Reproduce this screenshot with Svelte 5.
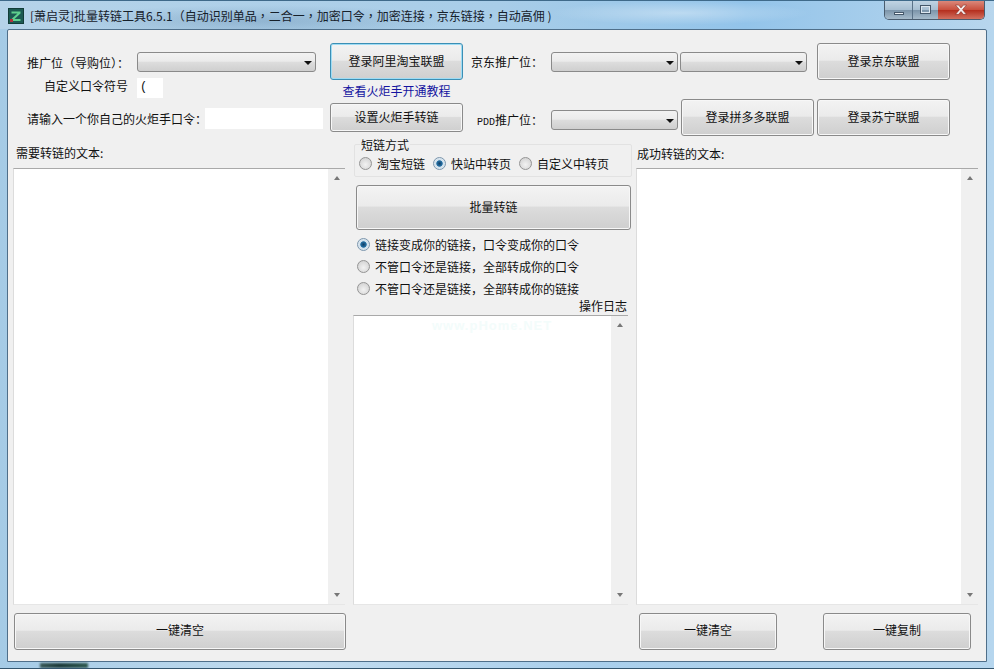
<script lang="ts">
  const shortModes = [
    { label: "淘宝短链", checked: false },
    { label: "快站中转页", checked: true },
    { label: "自定义中转页", checked: false },
  ];
  const convertModes = [
    { label: "链接变成你的链接，口令变成你的口令", checked: true },
    { label: "不管口令还是链接，全部转成你的口令", checked: false },
    { label: "不管口令还是链接，全部转成你的链接", checked: false },
  ];
</script>

{#snippet combo(cls: string)}
  <div class="combo {cls}"><span class="caret"></span></div>
{/snippet}

{#snippet textbox()}
  <div class="memo">
    <div class="scrollbar">
      <span class="arrow up"></span>
      <span class="arrow down"></span>
    </div>
  </div>
{/snippet}

{#snippet radio(checked: boolean)}
  <span class="radio" class:checked></span>
{/snippet}

<div class="window">
  <header class="titlebar">
    <svg class="app-icon" width="16" height="16" viewBox="0 0 16 16">
      <rect width="16" height="16" fill="#123c38" />
      <rect x="1" y="1" width="14" height="14" fill="#1c5a52" />
      <path d="M3.5 3.5h9v2l-6 5.5h6v2h-9v-2l6-5.5h-6z" fill="#5fd08e" />
      <rect x="2" y="11" width="3" height="3" fill="#b0303c" />
    </svg>
    <span class="title">[萧启灵]批量转链工具6.5.1（自动识别单品，二合一，加密口令，加密连接，京东链接，自动高佣 )</span>
    <div class="caption-buttons">
      <span class="cap min"><i></i></span>
      <span class="cap max"><i></i></span>
      <span class="cap close">
        <svg width="16" height="12" viewBox="0 0 14 11">
          <path d="M2 1h2.8L7 3.6 9.2 1H12L8.4 5.2 12 9.5H9.2L7 6.9 4.8 9.5H2l3.6-4.3z" fill="#f6eeee" stroke="#7c2a22" stroke-width=".5" />
        </svg>
      </span>
    </div>
  </header>

  <main class="client">
    <section class="top">
      <div class="top-left">
        <div class="row row-a">
          <span class="lbl">推广位（导购位）：</span>
          {@render combo("wide")}
        </div>
        <div class="row row-b">
          <span class="lbl">自定义口令符号</span>
          <div class="input symbol">(</div>
        </div>
        <div class="row row-c">
          <span class="lbl">请输入一个你自己的火炬手口令：</span>
          <div class="input token"></div>
        </div>
      </div>

      <div class="top-mid">
        <button class="btn focused login">登录阿里淘宝联盟</button>
        <span class="link">查看火炬手开通教程</span>
        <button class="btn setup">设置火炬手转链</button>
      </div>

      <div class="top-right">
        <div class="row jd">
          <span class="lbl jd-lbl">京东推广位：</span>
          {@render combo("narrow")}
          {@render combo("narrow")}
          <button class="btn site first">登录京东联盟</button>
        </div>
        <div class="row pdd">
          <span class="lbl pdd-lbl"><em>PDD</em>推广位：</span>
          {@render combo("narrow")}
          <button class="btn site pdd-btn">登录拼多多联盟</button>
          <button class="btn site">登录苏宁联盟</button>
        </div>
      </div>
    </section>

    <section class="panels">
      <div class="col col-left">
        <span class="cap-text">需要转链的文本:</span>
        {@render textbox()}
      </div>

      <div class="col col-mid">
        <fieldset class="group">
          <legend>短链方式</legend>
          {#each shortModes as m}
            <label class="opt">{@render radio(m.checked)}{m.label}</label>
          {/each}
        </fieldset>
        <button class="btn batch">批量转链</button>
        <div class="modes">
          {#each convertModes as m}
            <label class="opt">{@render radio(m.checked)}{m.label}</label>
          {/each}
        </div>
        <span class="log-title">操作日志</span>
        <div class="log-wrap">
          {@render textbox()}
          <span class="watermark">www.pHome.NET</span>
        </div>
      </div>

      <div class="col col-right">
        <span class="cap-text">成功转链的文本:</span>
        {@render textbox()}
      </div>
    </section>

    <footer class="bottom">
      <button class="btn clear-left">一键清空</button>
      <button class="btn clear-right">一键清空</button>
      <button class="btn copy">一键复制</button>
    </footer>
  </main>
  <div class="taskbar-smudge"></div>
</div>

<style>
  :global(body) {
    margin: 0;
    background: #b9d6ec;
  }
  .window {
    position: relative;
    width: 994px;
    height: 669px;
    box-sizing: border-box;
    padding: 0 7px 6px;
    display: flex;
    flex-direction: column;
    overflow: hidden;
    font-family: "Noto Sans CJK SC", sans-serif;
    font-size: 12px;
    color: #111;
    background: linear-gradient(90deg, #a5cbe6 0%, #c2dcef 30%, #a9cfec 60%, #b6d6ee 100%);
    border-top: 1px solid #3f6a8a;
    border-bottom: 1px solid #33556e;
  }
  .titlebar {
    height: 28px;
    flex-shrink: 0;
    display: flex;
    align-items: center;
    gap: 6px;
    margin: 0 -7px;
    padding-left: 8px;
    position: relative;
    background:
      radial-gradient(ellipse 200px 16px at 260px 20px, rgba(90, 130, 165, 0.35), transparent),
      radial-gradient(ellipse 130px 12px at 680px 12px, rgba(255, 255, 255, 0.35), transparent),
      linear-gradient(90deg, #b5d3e9, #a8cde8 50%, #93c4ea 75%, #b8d6ed);
  }
  .app-icon {
    flex-shrink: 0;
    margin-top: 1px;
  }
  .title {
    color: #16202a;
    white-space: nowrap;
    font-family: "Noto Sans CJK TC", sans-serif;
  }
  .caption-buttons {
    position: absolute;
    top: -1px;
    right: 9px;
    display: flex;
    height: 19px;
    border: 1px solid #4a5c6e;
    border-top: none;
    border-radius: 0 0 5px 5px;
    overflow: hidden;
  }
  .cap {
    display: flex;
    align-items: center;
    justify-content: center;
    height: 100%;
    border-right: 1px solid #5a7288;
    background: linear-gradient(#c3d6e5, #a8bfd2 50%, #7d95aa 55%, #a6bbcb);
  }
  .cap.min { width: 27px; }
  .cap.max { width: 25px; border-right: none; }
  .cap.close {
    width: 46px;
    border-right: none;
    background: linear-gradient(#dc8f82, #c9513f 50%, #b5301f 55%, #d2705f);
  }
  .cap.min i {
    width: 10px;
    height: 3px;
    margin-top: 7px;
    background: #f0f4f8;
    border: 1px solid #46586a;
    box-sizing: border-box;
  }
  .cap.max i {
    width: 11px;
    height: 9px;
    border: 1px solid #46586a;
    outline: 1px solid #dde6ee;
    outline-offset: -2px;
    box-sizing: border-box;
  }
  .client {
    flex: 1;
    display: flex;
    flex-direction: column;
    background: #f0f0f0;
    border: 1px solid #4f6f8a;
    border-radius: 2px 2px 0 0;
    box-sizing: border-box;
    padding: 13px 0 0 5px;
    min-height: 0;
  }

  .btn {
    font: inherit;
    color: #111;
    padding: 0 0 2px;
    border: 1px solid #8a8a8a;
    border-radius: 3px;
    background: linear-gradient(#f3f3f3 0%, #ebebeb 46%, #dcdcdc 50%, #cfcfcf 100%);
    box-shadow: inset 0 0 0 1px #f7f7f7;
  }
  .btn.focused {
    border-color: #3b8fb5;
    box-shadow: inset 0 0 0 1px #9fdcf4;
  }
  .combo {
    height: 20px;
    box-sizing: border-box;
    position: relative;
    flex-shrink: 0;
    border: 1px solid #8a8a8a;
    border-radius: 3px;
    background: linear-gradient(#f2f2f2 0%, #ebebeb 46%, #dddddd 50%, #cfcfcf 100%);
  }
  .combo.wide { width: 179px; }
  .combo.narrow { width: 127px; }
  .caret {
    position: absolute;
    right: 3px;
    top: 8px;
    border-style: solid;
    border-width: 4px 4px 0;
    border-color: #111 transparent transparent;
  }
  .input {
    box-sizing: border-box;
    background: #fff;
    height: 20px;
    line-height: 18px;
    font-family: "Liberation Mono", monospace;
    padding-left: 3px;
  }
  .lbl {
    white-space: nowrap;
  }

  .top {
    display: flex;
    height: 89px;
    flex-shrink: 0;
  }
  .row {
    display: flex;
    align-items: center;
  }
  .top-left {
    width: 317px;
    flex-shrink: 0;
    padding-top: 9px;
    box-sizing: border-box;
  }
  .row-a { height: 20px; padding-left: 14px; }
  .row-a .lbl { width: 110px; }
  .row-b { height: 20px; margin-top: 6px; padding-left: 31px; }
  .row-b .lbl { width: 93px; margin-top: -6px; }
  .symbol { width: 26px; }
  .row-c { height: 21px; margin-top: 10px; padding-left: 14px; }
  .row-c .lbl { width: 178px; }
  .token { width: 118px; height: 21px; }

  .top-mid {
    width: 133px;
    flex-shrink: 0;
    display: flex;
    flex-direction: column;
    align-items: center;
  }
  .login { width: 133px; height: 37px; }
  .link {
    color: #1414a0;
    height: 23px;
    line-height: 22px;
    white-space: nowrap;
  }
  .setup { width: 133px; height: 29px; }

  .top-right {
    margin-left: 8px;
    flex: 1;
    display: flex;
    flex-direction: column;
    gap: 19px;
  }
  .jd, .pdd { height: 37px; }
  .jd-lbl, .pdd-lbl { width: 80px; flex-shrink: 0; }
  .pdd-lbl { padding-left: 6px; width: 74px; margin-top: 3px; }
  .pdd-lbl em {
    font-family: "Liberation Mono", monospace;
    font-style: normal;
    font-size: 10px;
  }
  .jd .combo + .combo { margin-left: 2px; }
  .pdd .combo { margin-top: 4px; }
  .site { width: 133px; height: 37px; flex-shrink: 0; }
  .site.first { margin-left: 10px; }
  .pdd-btn { margin: 0 3px; }

  .panels {
    flex: 1;
    min-height: 0;
    display: flex;
    margin-top: 13px;
  }
  .col {
    display: flex;
    flex-direction: column;
    flex-shrink: 0;
  }
  .cap-text {
    height: 23px;
    line-height: 16px;
    flex-shrink: 0;
    white-space: nowrap;
    padding-left: 3px;
  }
  .col-left { width: 332px; }
  .col-mid { width: 278px; margin-left: 8px; }
  .col-right { width: 342px; margin-left: 5px; }
  .col-right .cap-text { padding: 1px 0 0 1px; height: 22px; }

  .memo {
    flex: 1;
    min-height: 0;
    display: flex;
    justify-content: flex-end;
    background: #fff;
    border-top: 1px solid #a9a9a9;
    border-left: 1px solid #dcdcdc;
    border-bottom: 1px solid #e6e6e6;
  }
  .scrollbar {
    width: 17px;
    background: #f0f0f0;
    display: flex;
    flex-direction: column;
    justify-content: space-between;
    align-items: center;
    padding: 7px 0 7px;
    box-sizing: border-box;
  }
  .arrow {
    border-style: solid;
    border-color: transparent;
  }
  .arrow.up {
    border-width: 0 3.5px 4px;
    border-bottom-color: #777;
  }
  .arrow.down {
    border-width: 4px 3.5px 0;
    border-top-color: #777;
  }

  .group {
    margin: -6px 0 0 1px;
    padding: 5px 0 0 4px;
    height: 38px;
    box-sizing: border-box;
    min-width: 0;
    width: 278px;
    border: 1px solid #e2e2e2;
    border-radius: 2px;
    display: flex;
    gap: 8px;
    flex-shrink: 0;
  }
  legend {
    padding: 0 1px;
    margin-left: 1px;
    line-height: 11px;
    margin-bottom: -3px;
  }
  .opt {
    display: flex;
    align-items: center;
    gap: 5px;
    white-space: nowrap;
    height: 22px;
  }
  .radio {
    width: 13px;
    height: 13px;
    box-sizing: border-box;
    flex-shrink: 0;
    border-radius: 50%;
    border: 1px solid #949494;
    background: radial-gradient(circle at 50% 60%, #f2f2f2, #cccccc);
  }
  .radio.checked {
    border-color: #7c96ad;
    background: radial-gradient(circle, #123f66 0, #2470a4 36%, #cfdfeb 46%, #eef3f7 100%);
  }
  .batch {
    width: 275px;
    height: 45px;
    margin: 8px 0 0 3px;
    flex-shrink: 0;
  }
  .modes {
    margin: 3px 0 0 4px;
    display: flex;
    flex-direction: column;
  }
  .log-title {
    text-align: right;
    height: 16px;
    line-height: 14px;
    padding-right: 4px;
    flex-shrink: 0;
  }
  .log-wrap {
    position: relative;
    flex: 1;
    min-height: 0;
    display: flex;
    width: 275px;
  }
  .watermark {
    position: absolute;
    left: 79px;
    top: 3px;
    font-family: "Liberation Sans", sans-serif;
    font-size: 13px;
    font-weight: 700;
    letter-spacing: 1px;
    color: #f3fcfb;
  }

  .bottom {
    height: 56px;
    flex-shrink: 0;
    display: flex;
    align-items: flex-start;
    padding-top: 8px;
    box-sizing: border-box;
  }
  .bottom .btn { height: 37px; padding-bottom: 4px; }
  .clear-left { width: 332px; margin-left: 1px; }
  .clear-right { width: 138px; margin-left: 293px; }
  .copy { width: 148px; margin-left: 46px; }

  .taskbar-smudge {
    position: absolute;
    left: 40px;
    bottom: 0;
    width: 48px;
    height: 5px;
    background: linear-gradient(90deg, #3a5a58, #1c3a3a 40%, #2e5a50);
    filter: blur(1px);
  }
</style>
